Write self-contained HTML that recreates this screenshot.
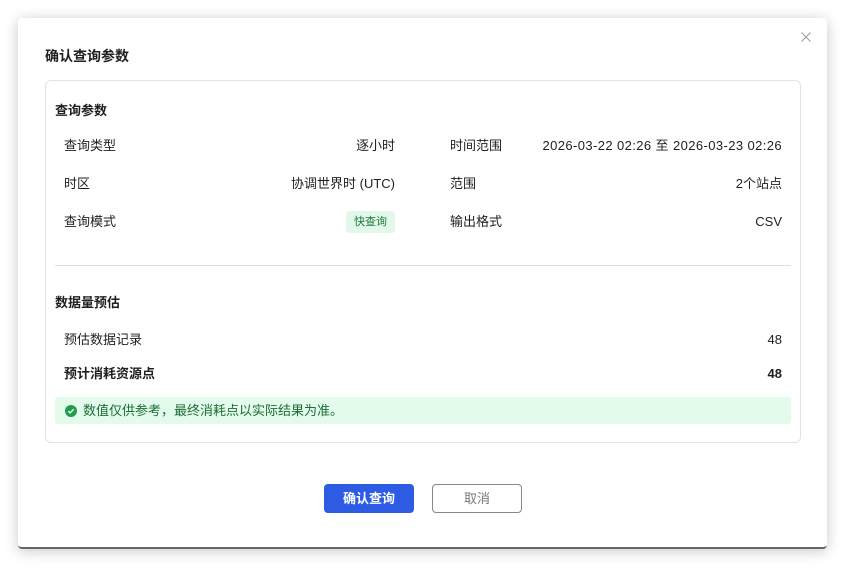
<!DOCTYPE html>
<html><head><meta charset="utf-8"><style>
*{box-sizing:border-box;margin:0;padding:0}
body{width:845px;height:568px;background:#fff;font-family:"Liberation Sans","Noto Sans CJK SC",sans-serif;color:#1f1f1f;position:relative;overflow:hidden;font-size:13px}
.modal{position:absolute;left:18px;top:18px;width:809px;height:531px;background:#fff;border-radius:4px;box-shadow:0 2px 14px rgba(0,0,0,.22);border-bottom:2px solid #666}
.x{position:absolute;left:782px;top:13px}
h1{position:absolute;left:27px;top:29px;font-size:14px;font-weight:bold;line-height:18px}
.box{position:absolute;left:27px;top:62px;width:756px;height:363px;border:1px solid #e2e2e2;border-radius:6px}
.t,.r,.rr{position:absolute;font-size:13px;line-height:16px;white-space:nowrap}
.t{font-weight:bold}
.rr{text-align:right}
.tag{position:absolute;background:#e3f8ea;color:#1a7a3a;font-size:11px;line-height:16px;padding:3px 8px;border-radius:3px}
.hr{position:absolute;left:9px;width:736px;top:184px;border-top:1px solid #ddd}
.note{position:absolute;left:9px;top:316px;width:736px;height:27px;background:#e2fbeb;border-radius:3px;color:#1d6b35;font-size:13px;line-height:27px;padding-left:28px}
.ic{position:absolute;left:10px;top:8px;width:12px;height:12px;line-height:0}
.btn{position:absolute;top:466px;height:29px;border-radius:4px;font-size:13px;text-align:center;line-height:29px}
</style></head><body>
<div class="modal">
<div class="x"><svg width="12" height="12" viewBox="0 0 12 12"><path d="M1.5 1.5l9 9M10.5 1.5l-9 9" stroke="#999" stroke-width="1" fill="none"/></svg></div>
<h1>确认查询参数</h1>
<div class="box">
<div class="t" style="left:9px;top:22px">查询参数</div>
<div class="r" style="left:18px;top:57px">查询类型</div>
<div class="rr" style="right:405px;top:57px">逐小时</div>
<div class="r" style="left:404px;top:57px">时间范围</div>
<div class="rr" style="right:18px;top:57px;letter-spacing:0.4px">2026-03-22 02:26 至 2026-03-23 02:26</div>
<div class="r" style="left:18px;top:95px">时区</div>
<div class="rr" style="right:405px;top:95px">协调世界时 (UTC)</div>
<div class="r" style="left:404px;top:95px">范围</div>
<div class="rr" style="right:18px;top:95px">2个站点</div>
<div class="r" style="left:18px;top:133px">查询模式</div>
<div class="tag" style="right:405px;top:130px">快查询</div>
<div class="r" style="left:404px;top:133px">输出格式</div>
<div class="rr" style="right:18px;top:133px">CSV</div>
<div class="hr"></div>
<div class="t" style="left:9px;top:214px">数据量预估</div>
<div class="r" style="left:18px;top:251px">预估数据记录</div>
<div class="rr" style="right:18px;top:251px">48</div>
<div class="t" style="left:18px;top:285px">预计消耗资源点</div>
<div class="t" style="right:18px;top:285px">48</div>
<div class="note"><div class="ic"><svg width="12" height="12" viewBox="0 0 12 12"><circle cx="6" cy="6" r="6" fill="#1f9e4a"/><path d="M3.3 6.2l1.8 1.7 3.6-3.6" stroke="#fff" stroke-width="1.4" fill="none"/></svg></div>数值仅供参考，最终消耗点以实际结果为准。</div>
</div>
<div class="btn" style="left:306px;width:90px;background:#2d5be3;color:#fff;font-weight:bold">确认查询</div>
<div class="btn" style="left:414px;width:90px;border:1px solid #888;color:#777;line-height:27px">取消</div>
</div>
</body></html>
